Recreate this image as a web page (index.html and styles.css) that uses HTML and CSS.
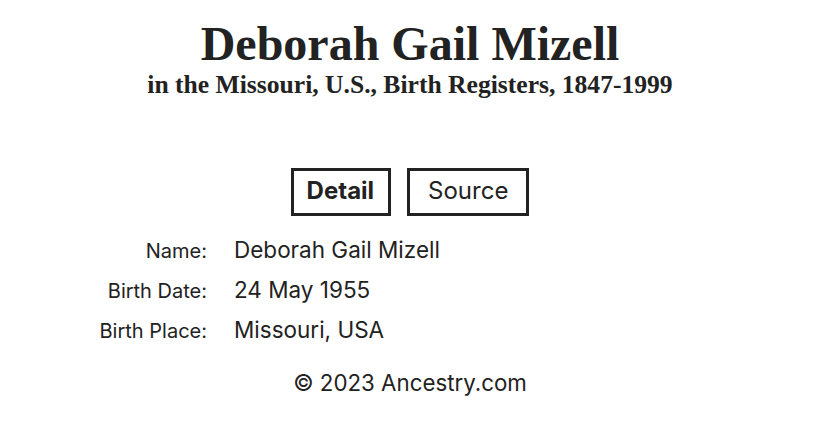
FILE: index.html
```html
<!DOCTYPE html>
<html lang="en">
<head>
<meta charset="utf-8">
<title>Deborah Gail Mizell</title>
<link rel="stylesheet" href="styles.css">
</head>
<body>
<main class="page">
  <header class="head">
    <h1 class="title">Deborah Gail Mizell</h1>
    <p class="subtitle">in the Missouri, U.S., Birth Registers, 1847-1999</p>
  </header>
  <nav class="tabs">
    <span class="tab tab-active">Detail</span>
    <span class="tab">Source</span>
  </nav>
  <dl class="facts">
    <dt>Name:</dt><dd>Deborah Gail Mizell</dd>
    <dt>Birth Date:</dt><dd>24 May 1955</dd>
    <dt>Birth Place:</dt><dd>Missouri, USA</dd>
  </dl>
  <footer class="foot">© 2023 Ancestry.com</footer>
</main>
</body>
</html>
```
FILE: styles.css
```css
html, body {
  margin: 0;
  padding: 0;
  background: #ffffff;
}
.page {
  width: 820px;
  color: #222222;
  font-family: "Inter", "Liberation Sans", Arial, sans-serif;
}
.head {
  text-align: center;
  padding-top: 18px;
}
.title {
  margin: 0;
  font-family: "Liberation Serif", "Times New Roman", serif;
  font-weight: bold;
  font-size: 48px;
  line-height: 52px;
  color: #222222;
}
.subtitle {
  margin: 0;
  font-family: "Liberation Serif", "Times New Roman", serif;
  font-weight: bold;
  font-size: 25.6px;
  line-height: 30px;
  color: #222222;
}
.tabs {
  display: flex;
  justify-content: center;
  gap: 16px;
  margin-top: 68px;
}
.tab {
  box-sizing: border-box;
  height: 48px;
  border: 3px solid #222222;
  padding: 0 18px 2px;
  font-size: 24px;
  line-height: 40px;
}
.tab-active {
  font-weight: bold;
  padding: 0 14px 2px 13px;
}
.facts {
  display: grid;
  grid-template-columns: 207px 1fr;
  column-gap: 27px;
  row-gap: 13px;
  align-items: baseline;
  margin: 21px 0 0 0;
  font-size: 22.5px;
  line-height: 26px;
}
.facts dt {
  text-align: right;
  font-size: 20px;
}
.facts dd {
  margin: 0;
}
.foot {
  text-align: center;
  margin-top: 26px;
  font-size: 22.3px;
  line-height: 26px;
}
```
